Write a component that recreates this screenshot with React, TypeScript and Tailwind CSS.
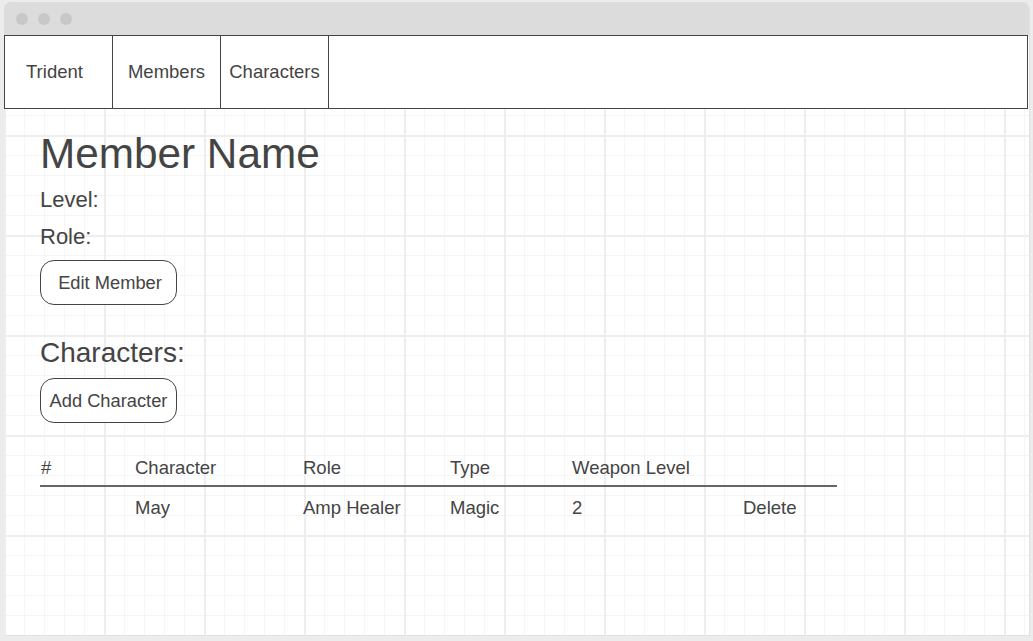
import React from "react";

const navItems = ["Trident", "Members", "Characters"];

const columns = ["#", "Character", "Role", "Type", "Weapon Level", ""];

const rows = [{ id: "", name: "May", role: "Amp Healer", type: "Magic", level: "2" }];

export default function App() {
  return (
    <div className="w-[1033px] h-[641px] bg-[#ececec] pt-[2px] pl-[4px] font-['Liberation_Sans',Arial,sans-serif] text-[#444]">
      <div className="w-[1025px] h-[633px] flex flex-col rounded-t-[6px] overflow-hidden bg-white shadow-[1px_1px_0_#e2e2e2]">
        {/* title bar */}
        <div className="h-[33px] shrink-0 bg-[#dcdcdc] flex items-center gap-[10px] pl-[12px]">
          <span className="w-[12px] h-[12px] rounded-full bg-[#c8c8c8]" />
          <span className="w-[12px] h-[12px] rounded-full bg-[#c8c8c8]" />
          <span className="w-[12px] h-[12px] rounded-full bg-[#c8c8c8]" />
        </div>

        {/* body with sketch grid */}
        <div className="flex-1 bg-white [background-image:linear-gradient(to_right,#eeeeee_2px,transparent_2px),linear-gradient(to_bottom,#eeeeee_2px,transparent_2px),linear-gradient(to_right,#f5f5f5_1px,transparent_1px),linear-gradient(to_bottom,#f5f5f5_1px,transparent_1px)] [background-size:100px_100px,100px_100px,20px_20px,20px_20px]">
          <nav className="w-[1024px] h-[74px] flex border border-[#444] bg-white text-[18.5px]">
            {navItems.map((item, i) => (
              <div
                key={item}
                className={`w-[108px] h-full flex items-center border-r border-[#444] ${
                  i === 0 ? "pl-[21px]" : "justify-center"
                }`}
              >
                {item}
              </div>
            ))}
          </nav>

          <main className="pl-[36px] pt-[21px]">
            <h1 className="text-[42.3px] leading-[48px] h-[48px]">Member Name</h1>
            <p className="mt-[9px] text-[22px] leading-[26px]">Level:</p>
            <p className="mt-[11px] text-[22px] leading-[26px]">Role:</p>
            <button className="mt-[10px] w-[137px] h-[45px] rounded-[14px] border border-[#444] bg-white text-[18.3px] pl-[3px]">
              Edit Member
            </button>

            <h2 className="mt-[32px] text-[28px] leading-[32px]">Characters:</h2>
            <button className="mt-[9px] w-[137px] h-[45px] rounded-[14px] border border-[#444] bg-white text-[18.3px]">
              Add Character
            </button>

            <div className="mt-[34px] w-[797px] text-[18.5px]">
              <div className="grid grid-cols-[95px_168px_147px_122px_171px_94px] leading-[22px] pb-[6px] border-b-2 border-[#666]">
                {columns.map((c, i) => (
                  <div key={i} className={i === 0 ? "pl-[1px]" : ""}>
                    {c}
                  </div>
                ))}
              </div>
              {rows.map((r) => (
                <div
                  key={r.name}
                  className="grid grid-cols-[95px_168px_147px_122px_171px_94px] leading-[22px] pt-[10px]"
                >
                  <div>{r.id}</div>
                  <div>{r.name}</div>
                  <div>{r.role}</div>
                  <div>{r.type}</div>
                  <div>{r.level}</div>
                  <div>Delete</div>
                </div>
              ))}
            </div>
          </main>
        </div>
      </div>
    </div>
  );
}
